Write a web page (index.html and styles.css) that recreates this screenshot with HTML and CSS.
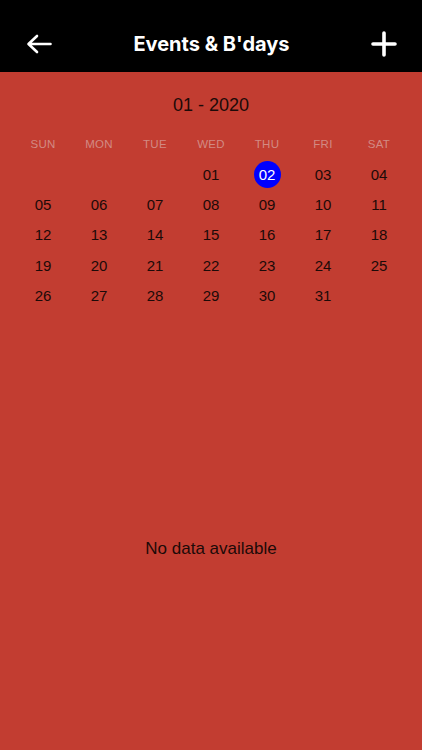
FILE: index.html
```html
<!DOCTYPE html>
<html>
<head>
<meta charset="utf-8">
<link rel="stylesheet" href="styles.css">
</head>
<body>
<div class="app">
  <header class="topbar">
    <button class="icon-btn back" aria-label="Back">
      <svg width="26" height="20" viewBox="0 0 26 20"><path d="M24.5 10H3 M11 2 L2.5 10 L11 18" fill="none" stroke="#fff" stroke-width="2.6" stroke-linecap="round" stroke-linejoin="round"/></svg>
    </button>
    <h1 class="title">Events &amp; B'days</h1>
    <button class="icon-btn add" aria-label="Add">
      <svg width="26" height="26" viewBox="0 0 26 26"><path d="M13 2V24 M2 13H24" fill="none" stroke="#fff" stroke-width="3.6" stroke-linecap="round"/></svg>
    </button>
  </header>
  <main class="content">
    <div class="month">01 - 2020</div>
    <div class="grid weekdays">
      <span>SUN</span><span>MON</span><span>TUE</span><span>WED</span><span>THU</span><span>FRI</span><span>SAT</span>
    </div>
    <div class="grid days">
      <span></span><span></span><span></span>
      <span>01</span><span><b class="sel">02</b></span><span>03</span><span>04</span>
      <span>05</span><span>06</span><span>07</span><span>08</span><span>09</span><span>10</span><span>11</span>
      <span>12</span><span>13</span><span>14</span><span>15</span><span>16</span><span>17</span><span>18</span>
      <span>19</span><span>20</span><span>21</span><span>22</span><span>23</span><span>24</span><span>25</span>
      <span>26</span><span>27</span><span>28</span><span>29</span><span>30</span><span>31</span><span></span>
    </div>
    <div class="empty">No data available</div>
  </main>
</div>
</body>
</html>
```
FILE: styles.css
```css
* { box-sizing: border-box; }
html, body { margin: 0; padding: 0; }
body {
  width: 422px;
  height: 750px;
  background: #c23d31;
  font-family: "Liberation Sans", Arial, sans-serif;
  overflow: hidden;
}
.app { display: flex; flex-direction: column; height: 750px; }
.topbar {
  height: 72px;
  background: #000;
  display: flex;
  align-items: center;
  justify-content: space-between;
  padding: 16px 25px 0 26px;
}
.icon-btn {
  background: none;
  border: 0;
  padding: 0;
  width: 26px;
  height: 26px;
  display: flex;
  align-items: center;
  justify-content: center;
}
.title {
  margin: 0;
  color: #fff;
  font-family: Inter, "Liberation Sans", sans-serif;
  font-weight: 700;
  font-size: 20px;
  letter-spacing: 0;
}
.content {
  flex: 1;
  background: #c23d31;
  display: flex;
  flex-direction: column;
  padding: 0 15px;
}
.month {
  text-align: center;
  font-size: 18px;
  color: #1c0a08;
  margin-top: 23px;
  line-height: 20px;
}
.grid {
  display: grid;
  grid-template-columns: repeat(7, 56px);
}
.weekdays {
  margin-top: 20px;
  height: 18px;
  align-items: center;
}
.weekdays span {
  text-align: center;
  font-size: 11.5px;
  color: #d28a83;
  letter-spacing: 0.3px;
}
.days {
  grid-auto-rows: 30.3px;
  margin-top: 6px;
}
.days span {
  display: flex;
  align-items: center;
  justify-content: center;
  font-size: 15px;
  color: #1c0a08;
}
.sel {
  width: 27px;
  height: 27px;
  border-radius: 50%;
  background: #0000ff;
  color: #fff;
  font-weight: 400;
  display: flex;
  align-items: center;
  justify-content: center;
}
.empty {
  margin-top: 229px;
  text-align: center;
  font-size: 17px;
  color: #1c0a08;
}
```
